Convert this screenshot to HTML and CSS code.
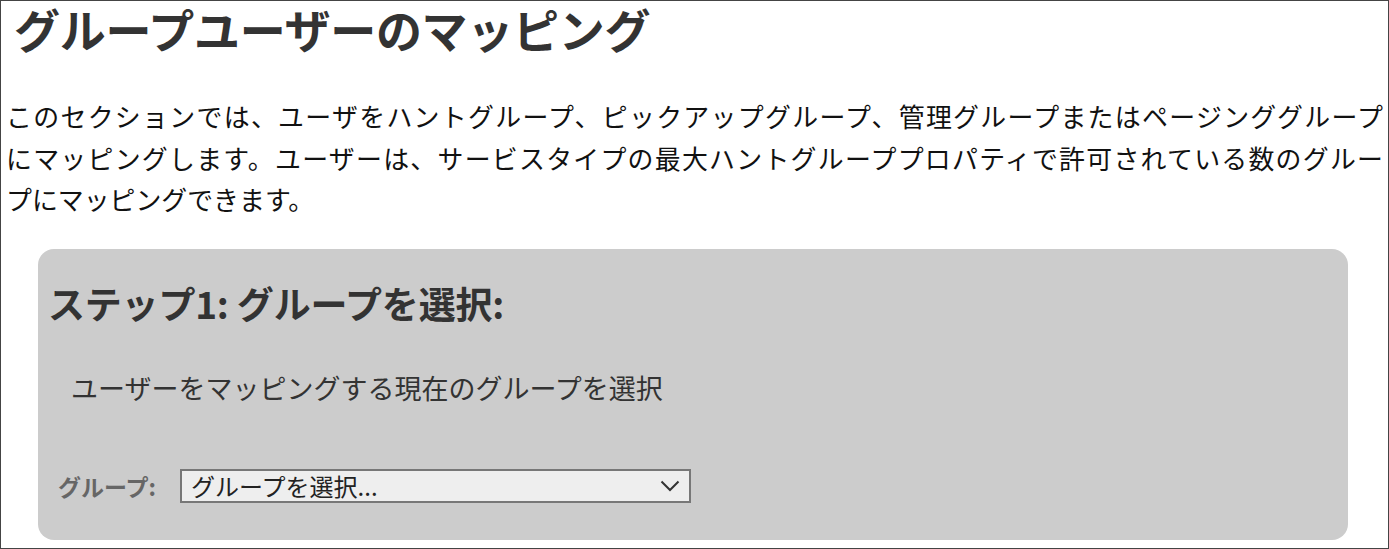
FILE: index.html
```html
<!DOCTYPE html>
<html lang="ja">
<head>
<meta charset="utf-8">
<title>グループユーザーのマッピング</title>
<link rel="stylesheet" href="styles.css">
</head>
<body>
<div class="page">
  <h1 class="title">グループユーザーのマッピング</h1>
  <p class="intro">このセクションでは、ユーザをハントグループ、ピックアップグループ、管理グループまたはページンググループ<wbr>にマッピングします。ユーザーは、サービスタイプの最大ハントグループプロパティで許可されている数のグルー<wbr><span class="nowrap">プにマッピングできます。</span></p>
  <section class="panel">
    <h2 class="panel-title">ステップ1: グループを選択:</h2>
    <p class="panel-desc">ユーザーをマッピングする現在のグループを選択</p>
    <div class="field">
      <label class="field-label" for="group">グループ:</label>
      <div class="select-wrap">
        <select id="group" class="select">
          <option>グループを選択...</option>
        </select>
        <svg class="chevron" width="20" height="12" viewBox="0 0 20 12" aria-hidden="true"><polyline points="1.5,1.5 10,10 18.5,1.5" fill="none" stroke="#333" stroke-width="2"/></svg>
      </div>
    </div>
  </section>
</div>
</body>
</html>
```

FILE: styles.css
```css
* { box-sizing: border-box; }
html, body { margin: 0; padding: 0; background: #fff; }
body { font-family: "Noto Sans CJK JP", "Noto Sans", sans-serif; color: #111; }

.page {
  height: 549px;
  border: 1px solid #444;
  overflow: hidden;
}

.title {
  margin: 0;
  padding-left: 13px;
  font-size: 46px;
  line-height: 54px;
  font-weight: 700;
  color: #333;
  letter-spacing: -0.3px;
}

.intro {
  margin: 40px 5px 0 5px;
  font-size: 25.9px;
  line-height: 41.5px;
  word-break: keep-all;
  text-align: justify;
  color: #111;
}

.nowrap { white-space: nowrap; }

.panel {
  margin: 29px 40px 0 37px;
  background: #ccc;
  border-radius: 16px;
  padding: 32px 10px 37px 10px;
}

.panel-title {
  margin: 0;
  font-size: 37px;
  line-height: 44px;
  font-weight: 700;
  color: #333;
  letter-spacing: -0.2px;
}

.panel-desc {
  margin: 45px 0 0 23px;
  font-size: 27px;
  line-height: 36px;
  color: #333;
}

.field {
  margin-top: 63px;
  display: grid;
  grid-template-columns: 132px 511px;
  align-items: center;
}

.field-label {
  padding-left: 10px;
  font-size: 23px;
  font-weight: 700;
  color: #666;
}

.select-wrap {
  position: relative;
  width: 511px;
  height: 34px;
}

.select {
  appearance: none;
  -webkit-appearance: none;
  width: 100%;
  height: 100%;
  margin: 0;
  border: 2px solid #777;
  border-radius: 0;
  background: #eee;
  padding: 0 40px 0 9px;
  font-family: "Noto Sans CJK JP", "Noto Sans", sans-serif;
  font-size: 24px;
  line-height: 30px;
  color: #222;
}

.chevron {
  position: absolute;
  right: 11px;
  top: 11px;
  pointer-events: none;
}
```
